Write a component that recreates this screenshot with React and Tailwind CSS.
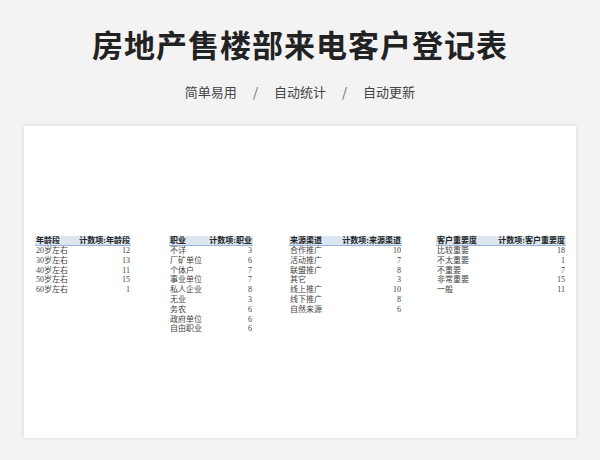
const F = { fontFamily: '"Noto Sans CJK SC", sans-serif' };
const S = { fontFamily: '"Liberation Serif", "Noto Sans CJK SC", serif' };
const tables = [
  { w: 96, ml: 11, h: ["年龄段", "计数项:年龄段"], rows: [["20岁左右",12],["30岁左右",13],["40岁左右",11],["50岁左右",15],["60岁左右",1]] },
  { w: 84, ml: 38, h: ["职业", "计数项:职业"], rows: [["不详",3],["厂矿单位",6],["个体户",7],["事业单位",7],["私人企业",8],["无业",3],["务农",6],["政府单位",6],["自由职业",6]] },
  { w: 113, ml: 36, h: ["来源渠道", "计数项:来源渠道"], rows: [["合作推广",10],["活动推广",7],["联盟推广",8],["其它",3],["线上推广",10],["线下推广",8],["自然来源",6]] },
  { w: 130, ml: 34, h: ["客户重要度", "计数项:客户重要度"], rows: [["比较重要",18],["不太重要",1],["不重要",7],["非常重要",15],["一般",11]] },
];
export default function App() {
  return (
    <div className="w-[600px] h-[460px] bg-[#f3f3f3] flex flex-col items-center overflow-hidden" style={F}>
      <div className="mt-[24px] text-[31px] leading-[40px] font-bold text-[#222] tracking-[1px]">房地产售楼部来电客户登记表</div>
      <div className="mt-[18px] text-[13px] leading-[20px] text-[#444] flex gap-[16px]">
        <span>简单易用</span><span className="text-[#666]">/</span><span>自动统计</span><span className="text-[#666]">/</span><span>自动更新</span>
      </div>
      <div className="mt-[24px] w-[552px] h-[312px] bg-white shadow-[0_0_4px_rgba(0,0,0,0.12)] flex items-start pt-[110px]" style={S}>
        {tables.map((t, i) => (
          <div key={i} className="text-[8px] leading-[9.8px] text-[#444]" style={{ width: t.w, marginLeft: t.ml }}>
            <div className="flex justify-between bg-[#dce6f1] border-b border-[#9bb4d6] font-semibold text-[#222] px-[1px] h-[10px]">
              <span>{t.h[0]}</span><span>{t.h[1]}</span>
            </div>
            {t.rows.map((r, j) => (
              <div key={j} className="flex justify-between px-[1px]"><span>{r[0]}</span><span>{r[1]}</span></div>
            ))}
          </div>
        ))}
      </div>
    </div>
  );
}
